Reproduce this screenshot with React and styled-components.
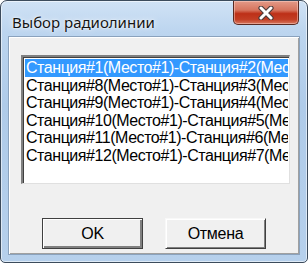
import React from "react"
import styled, { createGlobalStyle } from "styled-components"

const GlobalStyle = createGlobalStyle`
  html, body {
    margin: 0;
    padding: 0;
    background: #ffffff;
  }
`

const Window = styled.div`
  box-sizing: border-box;
  width: 308px;
  height: 263px;
  display: flex;
  flex-direction: column;
  padding: 0 7px 7px 7px;
  border: 1px solid #3c4b5c;
  border-radius: 7px 7px 5px 5px;
  background: linear-gradient(
    180deg,
    #d0e2f5 0%,
    #bcd5ef 12%,
    #afcbe9 40%,
    #b6d0ec 100%
  );
  box-shadow: inset 0 0 0 1px rgba(255, 255, 255, 0.55);
`

const TitleBar = styled.div`
  height: 35px;
  flex-shrink: 0;
  display: flex;
  align-items: flex-start;
`

const Title = styled.div`
  margin: 11px 0 0 4px;
  font-family: "Noto Sans", "Open Sans", sans-serif;
  font-size: 15px;
  color: #141414;
  text-shadow: 0 0 6px rgba(255, 255, 255, 0.9), 0 0 2px #ffffff;
  white-space: nowrap;
`

const CloseButton = styled.div`
  box-sizing: border-box;
  margin-left: auto;
  margin-right: 1px;
  width: 66px;
  height: 24px;
  display: flex;
  align-items: center;
  justify-content: center;
  border: 1px solid #5a2a22;
  border-top: none;
  border-radius: 0 0 5px 5px;
  background: linear-gradient(
    180deg,
    #e39a88 0%,
    #d6745e 40%,
    #bd3018 55%,
    #c23e24 80%,
    #d87860 100%
  );
  box-shadow: inset 0 0 0 1px rgba(255, 220, 210, 0.45);
`

const Client = styled.div`
  box-sizing: border-box;
  flex: 1;
  display: flex;
  flex-direction: column;
  background: #f0f0f0;
  border: 1px solid #8aa2bd;
  box-shadow: inset 1px 1px 0 #ffffff, inset -1px -1px 0 #a0a0a0,
    inset 2px 2px 0 #f0f0f0, inset -2px -2px 0 #f0f0f0;
`

const ListBox = styled.div`
  box-sizing: border-box;
  margin: 18px 9px 0 12px;
  height: 129px;
  background: #ffffff;
  border-top: 2px solid #808080;
  border-left: 2px solid #808080;
  border-right: 1px solid #e0e0e0;
  border-bottom: 1px solid #e0e0e0;
  box-shadow: inset 1px 1px 0 #404040;
  padding: 2px 1px 0 2px;
  overflow: hidden;
`

const Row = styled.div`
  height: 17.6px;
  line-height: 17.6px;
  padding-left: 1px;
  font-family: "Liberation Sans", sans-serif;
  font-size: 16px;
  letter-spacing: -0.45px;
  white-space: nowrap;
  overflow: hidden;
  color: ${(p) => (p.$selected ? "#ffffff" : "#000000")};
  background: ${(p) => (p.$selected ? "#3399ff" : "transparent")};
`

const ButtonRow = styled.div`
  margin-top: 34px;
  display: flex;
  justify-content: center;
  gap: 22px;
`

const Button = styled.div`
  box-sizing: border-box;
  width: 101px;
  height: 31px;
  display: flex;
  align-items: center;
  justify-content: center;
  background: #f0f0f0;
  font-family: "Liberation Sans", sans-serif;
  font-size: 16px;
  letter-spacing: -0.3px;
  color: #000000;
  border: 1px solid ${(p) => (p.$default ? "#404040" : "#f8f8f8")};
  border-right-color: #404040;
  border-bottom-color: #404040;
  box-shadow: ${(p) =>
    p.$default
      ? "inset 1px 1px 0 #ffffff, inset -2px -2px 0 #808080"
      : "inset 1px 1px 0 #ffffff, inset -1px -1px 0 #808080"};
`

const CloseIcon = () => (
  <svg width="18" height="14" viewBox="0 0 18 14">
    <path
      d="M4 2 L14 12 M14 2 L4 12"
      stroke="#4a3a3a"
      strokeWidth="5.2"
      strokeLinecap="round"
      fill="none"
    />
    <path
      d="M4 2 L14 12 M14 2 L4 12"
      stroke="#ffffff"
      strokeWidth="3"
      strokeLinecap="round"
      fill="none"
    />
  </svg>
)

const rows = [
  "Станция#1(Место#1)-Станция#2(Место#1)",
  "Станция#8(Место#1)-Станция#3(Место#1)",
  "Станция#9(Место#1)-Станция#4(Место#1)",
  "Станция#10(Место#1)-Станция#5(Место#1)",
  "Станция#11(Место#1)-Станция#6(Место#1)",
  "Станция#12(Место#1)-Станция#7(Место#1)",
]

const App = () => (
  <>
    <GlobalStyle />
    <Window>
      <TitleBar>
        <Title>Выбор радиолинии</Title>
        <CloseButton>
          <CloseIcon />
        </CloseButton>
      </TitleBar>
      <Client>
        <ListBox>
          {rows.map((r, i) => (
            <Row key={r} $selected={i === 0}>
              {r}
            </Row>
          ))}
        </ListBox>
        <ButtonRow>
          <Button $default>OK</Button>
          <Button>Отмена</Button>
        </ButtonRow>
      </Client>
    </Window>
  </>
)

export default App
